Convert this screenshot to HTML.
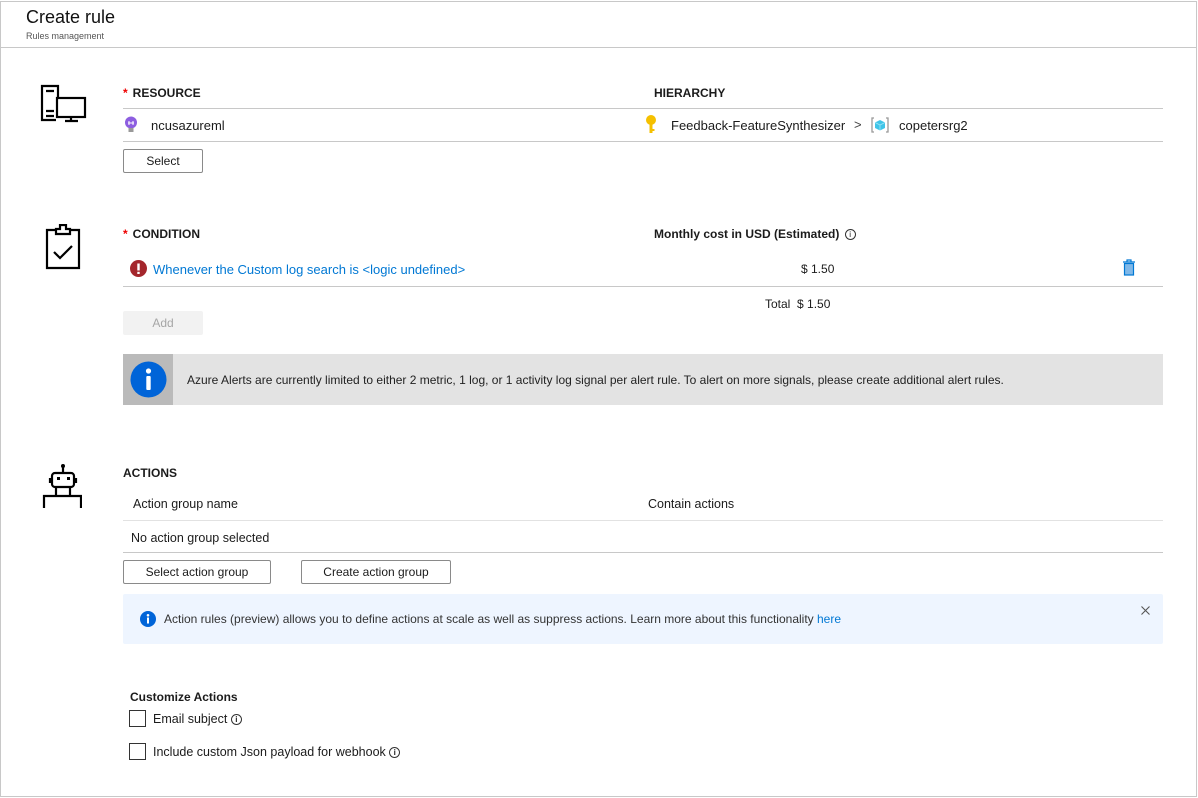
<!DOCTYPE html>
<html><head><meta charset="utf-8"><style>
*{margin:0;padding:0;box-sizing:border-box}
body{width:1198px;height:798px;background:#fff;font-family:"Segoe UI","Liberation Sans",sans-serif;color:#1b1b1b;position:relative;overflow:hidden;font-size:12px}
.a{position:absolute;white-space:nowrap}
.frame{position:absolute;left:0;top:1px;width:1197px;height:796px;border:1px solid #c8c8c8}
.hl{position:absolute;height:1px;background:#c8c8c8}
.b{font-weight:bold;font-size:12px}
.star{color:#e00;margin-right:5px}
.btn{position:absolute;border:1px solid #8a8a8a;border-radius:2px;background:#fff;text-align:center;font-size:12px;line-height:22px}
.lnk{color:#0078d4}
.cb{position:absolute;width:17px;height:17px;border:1px solid #333}
.inf{display:inline-block;width:11px;height:11px;border:1px solid #333;border-radius:50%;font-size:8px;line-height:9px;text-align:center;font-weight:bold;vertical-align:1px;margin-left:2px}
</style></head><body>
<div class="frame"></div>
<div class="a" style="left:26px;top:7px;font-size:18px;color:#111">Create rule</div>
<div class="a" style="left:26px;top:31px;font-size:9px;color:#555">Rules management</div>
<div class="hl" style="left:1px;top:47px;width:1196px"></div>

<svg class="a" style="left:38px;top:84px" width="50" height="40" viewBox="0 0 50 40" fill="none" stroke="#000" stroke-width="2.2">
<path d="M20 15V2H4v34h14M8 7h8M8 27h8M8 32h8"/><rect x="19" y="14" width="28" height="19"/><path d="M33 33v4M27 37h13"/></svg>
<div class="a b" style="left:123px;top:86px"><span class="star">*</span>RESOURCE</div>
<div class="a b" style="left:654px;top:86px">HIERARCHY</div>
<div class="hl" style="left:123px;top:108px;width:1040px"></div>
<svg class="a" style="left:124px;top:116px" width="14" height="18" viewBox="0 0 14 18"><circle cx="7" cy="6.5" r="6" fill="#8d5ee0"/><rect x="4.5" y="12" width="5" height="4" fill="#999"/><path d="M5 5v4M9 5v4M4 7h6" stroke="#fff" stroke-width="1"/></svg>
<div class="a" style="left:151px;top:118px;font-size:13px">ncusazureml</div>
<svg class="a" style="left:645px;top:115px" width="12" height="20" viewBox="0 0 12 20"><circle cx="6" cy="5" r="5" fill="#f5c000"/><rect x="4.5" y="9" width="3" height="9" fill="#f5c000"/><rect x="7" y="14" width="2.5" height="2" fill="#f5c000"/></svg>
<div class="a" style="left:671px;top:118px;font-size:13px">Feedback-FeatureSynthesizer</div>
<div class="a" style="left:854px;top:117px;font-size:13px;color:#444">&gt;</div>
<svg class="a" style="left:871px;top:116px" width="18" height="18" viewBox="0 0 18 18"><path d="M3 2H1v14h2M15 2h2v14h-2" stroke="#999" fill="none" stroke-width="1.3"/><path d="M9 4l5 2.5v5.5L9 14.5 4 12V6.5z" fill="#3fc4e8"/><path d="M9 9l5-2.5M9 9v5.5M9 9L4 6.5" stroke="#9ee6f7" stroke-width="0.8"/></svg>
<div class="a" style="left:899px;top:118px;font-size:13px">copetersrg2</div>
<div class="hl" style="left:123px;top:141px;width:1040px"></div>
<div class="btn" style="left:123px;top:149px;width:80px;height:24px">Select</div>

<svg class="a" style="left:45px;top:224px" width="38" height="46" viewBox="0 0 38 46" fill="none" stroke="#000" stroke-width="2.2"><path d="M11 6H2v38h32V6h-9M11 10V5h4V1h6v4h4v5z"/><path d="M9 28l6 6 12-12"/></svg>
<div class="a b" style="left:123px;top:227px"><span class="star">*</span>CONDITION</div>
<div class="a b" style="left:654px;top:227px">Monthly cost in USD (Estimated) <span class="inf" style="font-weight:normal">i</span></div>
<svg class="a" style="left:130px;top:260px" width="17" height="17"><circle cx="8.5" cy="8.5" r="8.5" fill="#a4262c"/><rect x="7.3" y="3.5" width="2.4" height="7" fill="#fff"/><rect x="7.3" y="11.8" width="2.4" height="2.2" fill="#fff"/></svg>
<div class="a lnk" style="left:153px;top:262px;font-size:13px">Whenever the Custom log search is &lt;logic undefined&gt;</div>
<div class="a" style="left:801px;top:262px;font-size:12px">$ 1.50</div>
<svg class="a" style="left:1122px;top:259px" width="14" height="17" viewBox="0 0 14 17"><path d="M1 3h12M5 3V1h4v2" stroke="#0078d4" fill="none" stroke-width="1.2"/><rect x="2.5" y="4.5" width="9" height="11.5" fill="#80b8e8" stroke="#0078d4" stroke-width="1.2"/></svg>
<div class="hl" style="left:123px;top:286px;width:1040px"></div>
<div class="a" style="left:765px;top:297px;font-size:12px">Total&nbsp; $ 1.50</div>
<div class="a" style="left:123px;top:311px;width:80px;height:24px;background:#f2f2f2;border-radius:2px;color:#a6a6a6;text-align:center;line-height:24px">Add</div>
<div class="a" style="left:123px;top:354px;width:1040px;height:51px;background:#e3e3e3"></div>
<div class="a" style="left:123px;top:354px;width:50px;height:51px;background:#bababa"></div>
<svg class="a" style="left:130px;top:361px" width="37" height="37"><circle cx="18.5" cy="18.5" r="18" fill="#0064d8"/><circle cx="18.5" cy="10" r="2.6" fill="#fff"/><rect x="16.3" y="15" width="4.4" height="14" rx="1" fill="#fff"/></svg>
<div class="a" style="left:187px;top:373px;font-size:12px;color:#222">Azure Alerts are currently limited to either 2 metric, 1 log, or 1 activity log signal per alert rule. To alert on more signals, please create additional alert rules.</div>

<svg class="a" style="left:42px;top:463px" width="40" height="46" viewBox="0 0 40 46" fill="none" stroke="#000" stroke-width="2.2"><circle cx="21" cy="3" r="2" fill="#000" stroke="none"/><path d="M21 4v5"/><rect x="10" y="10" width="22" height="14" rx="3"/><path d="M8 15v5M34 15v5"/><rect x="15" y="14" width="3" height="3" fill="#000" stroke="none"/><rect x="25" y="14" width="3" height="3" fill="#000" stroke="none"/><path d="M2 45V33h37v12M14 24v9M28 24v9"/></svg>
<div class="a b" style="left:123px;top:466px">ACTIONS</div>
<div class="a" style="left:133px;top:497px;font-size:12.5px">Action group name</div>
<div class="a" style="left:648px;top:497px;font-size:12.5px">Contain actions</div>
<div class="hl" style="left:123px;top:520px;width:1040px;background:#e2e2e2"></div>
<div class="a" style="left:131px;top:531px;font-size:12.5px">No action group selected</div>
<div class="hl" style="left:123px;top:552px;width:1040px"></div>
<div class="btn" style="left:123px;top:560px;width:148px;height:24px">Select action group</div>
<div class="btn" style="left:301px;top:560px;width:150px;height:24px">Create action group</div>
<div class="a" style="left:123px;top:594px;width:1040px;height:50px;background:#eef5ff;border-radius:2px"></div>
<svg class="a" style="left:140px;top:611px" width="16" height="16"><circle cx="8" cy="8" r="8" fill="#0064d8"/><circle cx="8" cy="4.3" r="1.3" fill="#fff"/><rect x="7" y="6.5" width="2" height="6" fill="#fff"/></svg>
<div class="a" style="left:164px;top:612px;font-size:12px;color:#333">Action rules (preview) allows you to define actions at scale as well as suppress actions. Learn more about this functionality <span class="lnk">here</span></div>
<svg class="a" style="left:1141px;top:606px" width="9" height="9"><path d="M0.5 0.5l8 8M8.5 0.5l-8 8" stroke="#555" stroke-width="1.1"/></svg>
<div class="a b" style="left:130px;top:690px">Customize Actions</div>
<div class="cb" style="left:129px;top:710px"></div>
<div class="a" style="left:153px;top:712px;font-size:12.5px">Email subject <span class="inf" style="margin-left:0">i</span></div>
<div class="cb" style="left:129px;top:743px"></div>
<div class="a" style="left:153px;top:745px;font-size:12.5px">Include custom Json payload for webhook <span class="inf" style="margin-left:0">i</span></div>
</body></html>
